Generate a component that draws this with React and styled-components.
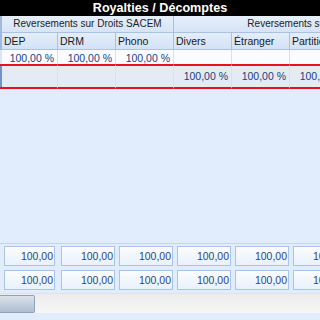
import styled, { createGlobalStyle } from 'styled-components';

const GlobalStyle = createGlobalStyle`
  html, body {
    margin: 0;
    padding: 0;
  }
  body {
    font-family: "Liberation Sans", Arial, sans-serif;
    font-size: 10.5px;
  }
`;

const Window = styled.div`
  width: 320px;
  height: 320px;
  overflow: hidden;
  display: flex;
  flex-direction: column;
  background-color: #e1edfd;
`;

const TitleBar = styled.div`
  height: 16px;
  flex-shrink: 0;
  background-color: #000;
  color: #fff;
  font-weight: bold;
  font-size: 12.6px;
  line-height: 16px;
  text-align: center;
  white-space: nowrap;
`;

const Grid = styled.div`
  display: grid;
  grid-template-columns: 2px 56px repeat(8, 58px);
  width: max-content;
  flex-shrink: 0;
`;

const Strip = styled.div`
  background-color: ${(p) => p.$color || '#9fb9e0'};
  height: ${(p) => p.$h}px;
`;

const BandCell = styled.div`
  grid-column: span ${(p) => p.$span};
  height: 17px;
  box-sizing: border-box;
  border-right: 1px solid #a9c2e4;
  border-bottom: 1px solid #a9c2e4;
  background: linear-gradient(#e6effb, #d6e4f7);
  color: #222;
  font-size: 10px;
  line-height: 16px;
  text-align: center;
  white-space: nowrap;
  overflow: hidden;
`;

const HeadCell = styled.div`
  height: 17px;
  box-sizing: border-box;
  border-right: 1px solid #a9c2e4;
  border-bottom: 1px solid #a9c2e4;
  background: linear-gradient(#e4eefb, #d3e2f6);
  color: #1a1a1a;
  line-height: 16px;
  padding-left: 2px;
  white-space: nowrap;
  overflow: hidden;
`;

const DataCell = styled.div`
  height: ${(p) => (p.$selected ? 25 : 14)}px;
  box-sizing: border-box;
  border-right: 1px solid #d8e2ef;
  background-color: ${(p) => (p.$selected ? '#e5ebf4' : '#fafcff')};
  border-top: ${(p) => (p.$selected ? '2px solid #e8101c' : 'none')};
  border-bottom: ${(p) => (p.$selected ? '2px solid #e8101c' : 'none')};
  color: #22407c;
  line-height: ${(p) => (p.$selected ? 21 : 16)}px;
  text-align: right;
  padding-right: 3px;
  white-space: nowrap;
`;

const SelStrip = styled.div`
  height: 25px;
  box-sizing: border-box;
  border-top: 2px solid #e8101c;
  border-bottom: 2px solid #e8101c;
  background-color: #6f93cc;
`;

const Spacer = styled.div`
  flex: 1;
`;

const Footer = styled.div`
  flex-shrink: 0;
  border-top: 1px solid #c3d5ef;
  padding: 2px 0 3px;
  display: flex;
  flex-direction: column;
  gap: 4px;
`;

const BoxRow = styled.div`
  display: grid;
  grid-template-columns: 2px 56px repeat(8, 58px);
  width: max-content;
`;

const BoxCell = styled.div`
  box-sizing: border-box;
  padding: ${(p) => (p.$first ? '0 3px 0 2px' : '0 1px 0 3px')};
`;

const Box = styled.div`
  height: 20px;
  box-sizing: border-box;
  border: 1px solid #a9c3ea;
  background: linear-gradient(#fbfdff, #e9f1fc);
  color: #2a4680;
  line-height: 18px;
  text-align: right;
  padding-right: 1px;
`;

const ScrollTrack = styled.div`
  height: 20px;
  flex-shrink: 0;
  box-sizing: border-box;
  background: linear-gradient(#ececec, #f6f6f6);
  border-top: 1px solid #e2e2e2;
  display: flex;
  align-items: center;
`;

const Thumb = styled.div`
  width: 35px;
  height: 18px;
  box-sizing: border-box;
  border: 1px solid #8fa2ba;
  border-left: none;
  border-radius: 0 2px 2px 0;
  background: linear-gradient(#dbe3ec, #aebdcf);
`;

const Bottom = styled.div`
  height: 7px;
  flex-shrink: 0;
`;

const columns = ['DEP', 'DRM', 'Phono', 'Divers', 'Étranger', 'Partition', '', '', ''];
const row1 = ['100,00 %', '100,00 %', '100,00 %', '', '', '', '', '', ''];
const row2 = ['', '', '', '100,00 %', '100,00 %', '100,00 %', '', '', ''];

const App = () => {
  return (
    <Window>
      <GlobalStyle />
      <TitleBar>Royalties / Décomptes</TitleBar>
      <Grid>
        <Strip $h={17} />
        <BandCell $span={3}>Reversements sur Droits SACEM</BandCell>
        <BandCell $span={5}>Reversements sur Droits SDRM</BandCell>
        <BandCell $span={1} />
        <Strip $h={17} />
        {columns.map((c, i) => (
          <HeadCell key={'h' + i}>{c}</HeadCell>
        ))}
        <Strip $h={14} $color="#dce6f3" />
        {row1.map((v, i) => (
          <DataCell key={'a' + i}>{v}</DataCell>
        ))}
        <SelStrip />
        {row2.map((v, i) => (
          <DataCell key={'b' + i} $selected>{v}</DataCell>
        ))}
      </Grid>
      <Spacer />
      <Footer>
        {[0, 1].map((r) => (
          <BoxRow key={r}>
            <div />
            {columns.map((c, i) => (
              <BoxCell key={i} $first={i === 0}>
                <Box>100,00</Box>
              </BoxCell>
            ))}
          </BoxRow>
        ))}
      </Footer>
      <ScrollTrack>
        <Thumb />
      </ScrollTrack>
      <Bottom />
    </Window>
  );
};

export default App;
